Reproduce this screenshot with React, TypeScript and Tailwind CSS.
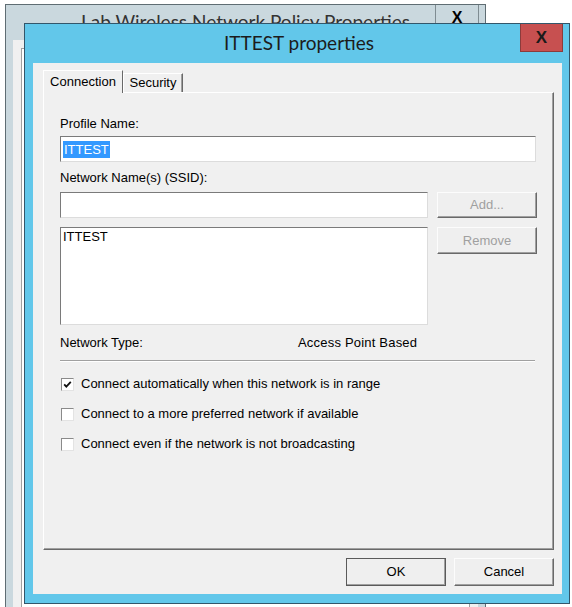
import React from "react";

// Windows-8 style property sheet sitting over another (inactive) dialog

const ui = "font-['Liberation_Sans',Arial,sans-serif] text-[13px] leading-4 text-black";
const titleFont = "font-['Lato','Liberation_Sans',sans-serif] text-[19px]";

function Field({ className = "", children }: { className?: string; children?: React.ReactNode }) {
  return (
    <div
      className={`bg-white border border-t-[#7a7a7a] border-l-[#7a7a7a] border-r-[#dcdcdc] border-b-[#dcdcdc] ${className}`}
    >
      {children}
    </div>
  );
}

function Button({
  label,
  disabled,
  isDefault,
  className = "",
}: {
  label: string;
  disabled?: boolean;
  isDefault?: boolean;
  className?: string;
}) {
  const edge = isDefault
    ? "border-[#5a5a5a]"
    : "border-t-[#fcfcfc] border-l-[#fcfcfc] border-r-[#696969] border-b-[#696969]";
  return (
    <div
      className={`flex items-center justify-center bg-[#efefef] border ${edge} shadow-[inset_-1px_-1px_0_#a0a0a0] ${
        disabled ? "text-[#a0a0a0]" : "text-black"
      } ${className}`}
    >
      {label}
    </div>
  );
}

function Checkbox({ checked, label }: { checked?: boolean; label: string }) {
  return (
    <div className="flex items-center h-4">
      <div className="ml-px w-[13px] h-[13px] bg-white border border-t-[#8a8a8a] border-l-[#8a8a8a] border-r-[#e3e3e3] border-b-[#e3e3e3] flex items-center justify-center">
        {checked && (
          <svg width="11" height="11" viewBox="0 0 11 11">
            <path d="M2.2 5.4 L4.3 7.6 L8.8 2.8" fill="none" stroke="#111" strokeWidth="1.8" />
          </svg>
        )}
      </div>
      <span className="ml-[7px]">{label}</span>
    </div>
  );
}

function BackgroundWindow() {
  return (
    <div className="absolute left-[5px] top-[4px] w-[481px] h-[700px] border border-[#5f6d73] bg-[#cad8de] flex flex-col">
      <div className="h-[35px] relative flex items-center justify-center">
        <span className={`${titleFont} text-[#333]`}>Lab Wireless Network Policy Properties</span>
        <div className="absolute left-[429px] top-0 w-[44px] h-[26px] border-x border-[#7f8c92] flex items-center justify-center font-['Liberation_Sans',sans-serif] font-bold text-[16px] text-black">
          X
        </div>
      </div>
      <div className="flex-1 mx-[7px] bg-[#f0f0f0] p-[8px]">
        <div className="h-full border border-[#a0a0a0] bg-white" />
      </div>
    </div>
  );
}

export default function App() {
  return (
    <div className="relative w-[572px] h-[607px] overflow-hidden bg-white">
      <BackgroundWindow />

      <div className="absolute left-[24px] top-[23px] w-[546px] h-[581px] border border-[#33566a] bg-[#62c7ea] flex flex-col">
        {/* Title bar */}
        <div className="h-[39px] shrink-0 relative flex items-center justify-center">
          <span className={`${titleFont} text-[#1c1c1c] pl-[4px]`}>ITTEST properties</span>
          <div className="absolute left-[495px] top-0 w-[43px] h-[28px] bg-[#c75050] border border-[#8c3b3b] border-t-0 flex items-center justify-center font-['Liberation_Sans',sans-serif] font-bold text-[17px] text-[#1a1a1a]">
            X
          </div>
        </div>

        {/* Client area */}
        <div className={`${ui} flex-1 ml-[8px] mr-[7px] mb-[9px] bg-[#f0f0f0] pt-[7px] pl-[10px] pr-[8px] flex flex-col`}>
          <div className="h-[22px] flex items-end">
            <div className="relative z-10 -mb-px h-[23px] w-[80px] flex items-center justify-center bg-[#f0f0f0] border-t border-l border-t-white border-l-white border-r border-r-[#696969]">
              Connection
            </div>
            <div className="h-[19px] w-[60px] flex items-center justify-center border-t border-l border-t-white border-l-white border-r border-r-[#696969] shadow-[inset_-1px_0_0_#a0a0a0]">
              Security
            </div>
          </div>

          {/* Tab page */}
          <div className="h-[458px] border border-t-white border-l-white border-r-[#696969] border-b-[#696969] shadow-[inset_-1px_-1px_0_#a0a0a0] pl-[16px] flex flex-col">
            <div className="mt-[23px]">Profile Name:</div>
            <Field className="mt-[4px] w-[476px] h-[26px] flex items-center pl-[2px]">
              <span className="bg-[#3399ff] text-white h-[17px] leading-[17px] px-px">ITTEST</span>
            </Field>

            <div className="mt-[8px]">Network Name(s) (SSID):</div>
            <div className="mt-[6px] flex gap-[9px]">
              <Field className="w-[368px] h-[26px]" />
              <Button label="Add..." disabled className="w-[100px] h-[26px]" />
            </div>
            <div className="mt-[9px] flex gap-[9px] items-start">
              <Field className="w-[368px] h-[98px] pl-[2px] pt-px">ITTEST</Field>
              <Button label="Remove" disabled className="w-[100px] h-[27px]" />
            </div>

            <div className="mt-[10px] flex">
              <span className="w-[238px]">Network Type:</span>
              <span className="tracking-[0.2px]">Access Point Based</span>
            </div>
            <div className="mt-[9px] w-[475px] border-t border-t-[#a0a0a0] border-b border-b-white" />

            <div className="mt-[14px] flex flex-col gap-[14px]">
              <Checkbox checked label="Connect automatically when this network is in range" />
              <Checkbox label="Connect to a more preferred network if available" />
              <Checkbox label="Connect even if the network is not broadcasting" />
            </div>
          </div>

          <div className="mt-[8px] flex justify-end gap-[8px]">
            <Button label="OK" isDefault className="w-[100px] h-[28px]" />
            <Button label="Cancel" className="w-[100px] h-[28px]" />
          </div>
        </div>
      </div>
    </div>
  );
}
